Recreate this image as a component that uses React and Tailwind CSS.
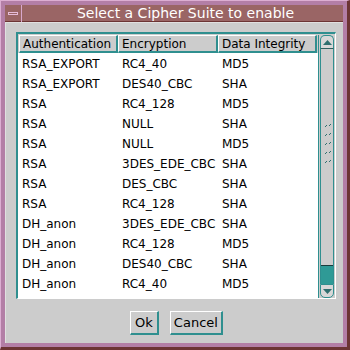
const rows = [
  ["RSA_EXPORT", "RC4_40", "MD5"],
  ["RSA_EXPORT", "DES40_CBC", "SHA"],
  ["RSA", "RC4_128", "MD5"],
  ["RSA", "NULL", "SHA"],
  ["RSA", "NULL", "MD5"],
  ["RSA", "3DES_EDE_CBC", "SHA"],
  ["RSA", "DES_CBC", "SHA"],
  ["RSA", "RC4_128", "SHA"],
  ["DH_anon", "3DES_EDE_CBC", "SHA"],
  ["DH_anon", "RC4_128", "MD5"],
  ["DH_anon", "DES40_CBC", "SHA"],
  ["DH_anon", "RC4_40", "MD5"],
];

const HeaderCell = ({ children, w }) => (
  <div
    className={`${w} h-[18px] flex items-center pl-[3px] bg-[#cccccc] border-t border-l border-white border-b-2 border-r-2 border-b-[#2f8f8f] border-r-[#2f8f8f]`}
  >
    {children}
  </div>
);

export default function App() {
  return (
    <div
      className="w-[350px] h-[350px] bg-[#b37ea6] border-t border-l border-[#dcaed2] border-r-[3px] border-b-[3px] border-r-[#6c3434] border-b-[#6c3434] p-[4px] flex flex-col"
      style={{ fontFamily: '"DejaVu Sans", sans-serif' }}
    >
      <div className="h-[17px] flex bg-[#9a6565] border-b border-[#6c3434]">
        <div className="w-[17px] h-[17px] border-r border-[#d8a8cc] flex items-center justify-center">
          <div className="w-[10px] h-[3px] border border-[#e6bcd8] bg-[#9a6565]" />
        </div>
        <div className="flex-1 flex items-center justify-center text-white text-[14px] leading-none pl-[6px]">
          Select a Cipher Suite to enable
        </div>
      </div>
      <div className="flex-1 bg-[#cccccc] border-t border-l border-[#e0e0e0] flex flex-col pt-[9px] px-[10px]">
        <div className="h-[267px] w-[320px] flex border-t-2 border-l-2 border-[#2f8f8f] border-b border-r border-b-white border-r-white">
          <div className="flex-1 flex flex-col bg-white text-[12px] text-black">
            <div className="flex pt-[1px] pl-[1px] bg-[#cccccc]">
              <HeaderCell w="w-[99px]">Authentication</HeaderCell>
              <HeaderCell w="w-[100px]">Encryption</HeaderCell>
              <HeaderCell w="w-[99px]">Data Integrity</HeaderCell>
            </div>
            <div className="flex flex-col pt-[1px]">
              {rows.map((r, i) => (
                <div key={i} className="h-[20px] flex items-center pl-[4px]">
                  <div className="w-[100px]">{r[0]}</div>
                  <div className="w-[100px]">{r[1]}</div>
                  <div className="w-[90px]">{r[2]}</div>
                </div>
              ))}
            </div>
          </div>
          <div className="w-[17px] flex flex-col bg-[#cccccc] border-l border-[#2f8f8f] mt-[1px]">
            <div className="h-[14px] mx-[1px] border border-[#2f8f8f] rounded-t-[5px] bg-[#d8d8d8] flex items-center justify-center border-b-[#2f6060]">
              <svg width="9" height="5" viewBox="0 0 9 5">
                <polygon points="4.5,0 9,5 0,5" fill="#2f6f6f" />
              </svg>
            </div>
            <div className="flex-1 mx-[1px] border-x border-[#2f8f8f] flex flex-col">
              <div className="h-[74px]" />
              <div className="flex flex-col items-center gap-[4px] pl-[2px]">
                {[0, 1, 2, 3, 4].map((k) => (
                  <svg key={k} width="8" height="5" viewBox="0 0 8 5">
                    <rect x="1" y="3" width="1" height="1" fill="#2f6f6f" />
                    <rect x="2" y="2" width="1" height="1" fill="#2f6f6f" />
                    <rect x="5" y="2" width="1" height="1" fill="#2f6f6f" />
                    <rect x="6" y="1" width="1" height="1" fill="#2f6f6f" />
                  </svg>
                ))}
              </div>
              <div className="flex-1" />
              <div className="h-[19px] bg-[#2f9a96] border-t border-[#1c3c3c]" />
            </div>
            <div className="h-[14px] mx-[1px] border border-[#2f8f8f] rounded-b-[5px] bg-[#d8d8d8] flex items-center justify-center">
              <svg width="9" height="5" viewBox="0 0 9 5">
                <polygon points="0,0 9,0 4.5,5" fill="#2f6f6f" />
              </svg>
            </div>
          </div>
        </div>
        <div className="flex justify-center gap-[11px] mt-[12px] text-[13px] text-black ml-[4px]">
          <div className="h-[24px] px-[4px] flex items-center border-t border-l border-white border-b-2 border-r-2 border-b-[#2f8f8f] border-r-[#2f8f8f]">
            Ok
          </div>
          <div className="h-[24px] px-[3px] flex items-center border-t border-l border-white border-b-2 border-r-2 border-b-[#2f8f8f] border-r-[#2f8f8f]">
            Cancel
          </div>
        </div>
      </div>
    </div>
  );
}
